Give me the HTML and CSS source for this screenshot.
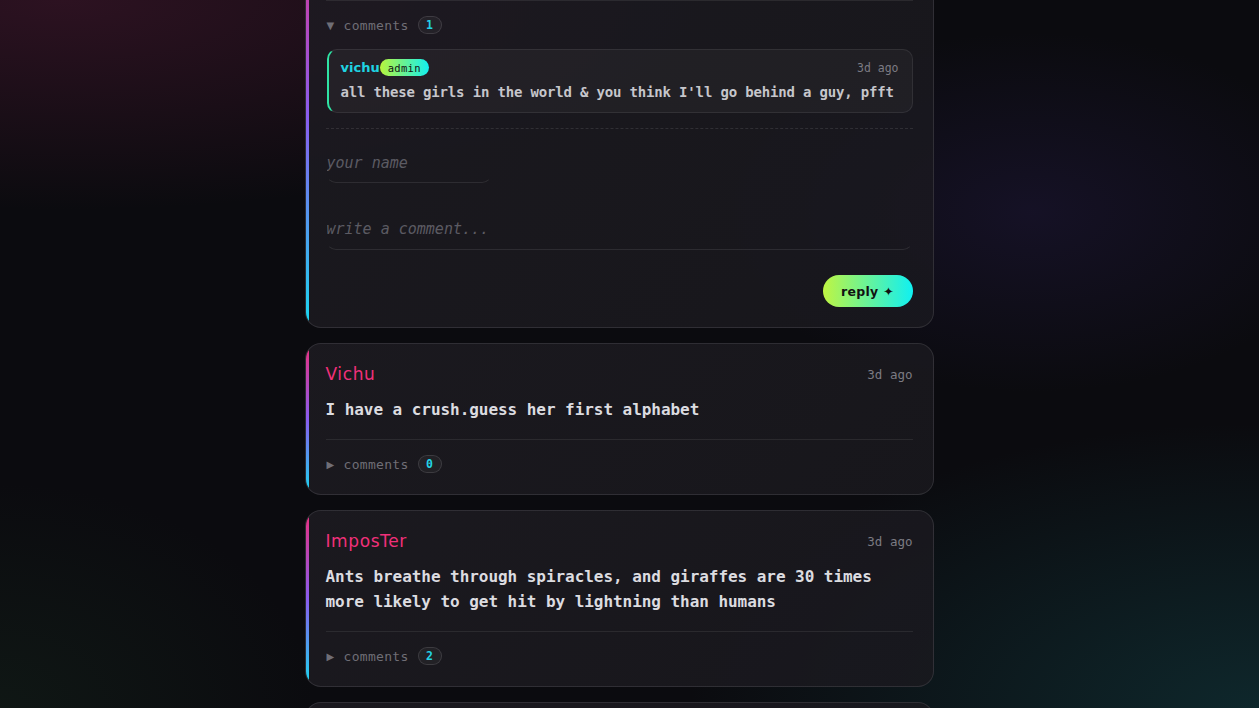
FILE: index.html
```html
<!DOCTYPE html>
<html lang="en">
<head>
<meta charset="utf-8">
<title>confessions</title>
<link rel="stylesheet" href="styles.css">
</head>
<body>
<div class="page">
  <main class="feed">
    <article class="card">
      <header class="card-head">
        <span class="author">anon</span>
        <span class="time">3d ago</span>
      </header>
      <p class="card-text">hello there</p>
      <section class="comments">
        <div class="toggle"><span class="caret">▼</span> comments <span class="count">1</span></div>
        <div class="reply">
          <div class="reply-head">
            <span class="reply-name">vichu</span><span class="admin">admin</span>
            <span class="reply-time">3d ago</span>
          </div>
          <p class="reply-text">all these girls in the world &amp; you think I'll go behind a guy, pfft</p>
        </div>
        <form class="reply-form">
          <input class="name-input" type="text" placeholder="your name">
          <textarea class="comment-input" rows="1" placeholder="write a comment..."></textarea>
          <div class="form-actions">
            <button class="reply-btn" type="button">reply ✦</button>
          </div>
        </form>
      </section>
    </article>

    <article class="card">
      <header class="card-head">
        <span class="author">Vichu</span>
        <span class="time">3d ago</span>
      </header>
      <p class="card-text">I have a crush.guess her first alphabet</p>
      <section class="comments">
        <div class="toggle"><span class="caret">▶</span> comments <span class="count">0</span></div>
      </section>
    </article>

    <article class="card">
      <header class="card-head">
        <span class="author">ImposTer</span>
        <span class="time">3d ago</span>
      </header>
      <p class="card-text">Ants breathe through spiracles, and giraffes are 30 times more likely to get hit by lightning than humans</p>
      <section class="comments">
        <div class="toggle"><span class="caret">▶</span> comments <span class="count">2</span></div>
      </section>
    </article>

    <article class="card">
      <header class="card-head">
        <span class="author">anon</span>
        <span class="time">3d ago</span>
      </header>
      <p class="card-text">...</p>
    </article>
  </main>
</div>
</body>
</html>
```
FILE: styles.css
```css
html, body {
  margin: 0;
  height: 100%;
}
body {
  overflow: hidden;
  background-color: #0b0b0f;
  background-image:
    radial-gradient(ellipse 900px 280px at 5% 0%, rgba(95, 28, 60, 0.4), transparent 75%),
    radial-gradient(ellipse 420px 240px at 82% 30%, rgba(45, 32, 90, 0.3), transparent 75%),
    radial-gradient(ellipse 760px 380px at 100% 100%, rgba(20, 85, 90, 0.38), transparent 75%),
    radial-gradient(ellipse 420px 300px at 0% 100%, rgba(30, 65, 40, 0.22), transparent 75%);
  font-family: "DejaVu Sans Mono", "Liberation Mono", monospace;
  color: #e6e6ea;
}
.page {
  display: flex;
  justify-content: center;
  padding-right: 21px;
}
.feed {
  width: 629px;
  margin-top: -96px;
  display: flex;
  flex-direction: column;
  gap: 15px;
}
.card {
  position: relative;
  overflow: hidden;
  box-sizing: border-box;
  border: 1px solid rgba(255, 255, 255, 0.1);
  border-radius: 16px;
  padding: 20px;
  background: linear-gradient(135deg, rgba(30, 28, 35, 0.82), rgba(26, 25, 31, 0.82));
}
.card::before {
  content: "";
  position: absolute;
  left: 0;
  top: 0;
  bottom: 0;
  width: 3px;
  background: linear-gradient(180deg, #ec2f7f 0%, #8a5cf0 50%, #18d8f0 100%);
}
.card-head {
  display: flex;
  justify-content: space-between;
  align-items: center;
  height: 20px;
}
.author {
  font-family: "DejaVu Sans", sans-serif;
  font-size: 17px;
  letter-spacing: 0.6px;
  color: #f0307a;
}
.time {
  font-size: 12.5px;
  color: #7c7b83;
}
.card-text {
  margin: 13px 0 17px;
  font-size: 16px;
  font-weight: bold;
  letter-spacing: -0.05px;
  line-height: 25px;
  color: #dcdce0;
}
.comments {
  border-top: 1px solid rgba(255, 255, 255, 0.08);
  padding-top: 14px;
}
.toggle {
  display: flex;
  align-items: center;
  height: 20px;
  font-size: 13px;
  letter-spacing: 0.3px;
  color: #6f6e76;
  gap: 7px;
}
.caret {
  font-family: "DejaVu Sans", sans-serif;
  font-size: 10px;
  width: 10px;
  padding-left: 1px;
}
.count {
  margin-left: 2px;
  display: inline-flex;
  align-items: center;
  justify-content: center;
  width: 24px;
  height: 18px;
  box-sizing: border-box;
  border: 1px solid rgba(255, 255, 255, 0.12);
  border-radius: 9px;
  background: rgba(255, 255, 255, 0.04);
  color: #22d3e6;
  font-size: 11.5px;
  font-weight: bold;
  letter-spacing: 0;
}
.reply {
  margin: 14px 0 15px 1px;
  border: 1px solid rgba(255, 255, 255, 0.08);
  border-left: 2px solid #2fe3a4;
  border-radius: 10px;
  background: rgba(255, 255, 255, 0.035);
  padding: 9px 13px 10px 12px;
}
.reply-head {
  display: flex;
  align-items: center;
  height: 17px;
}
.reply-name {
  font-family: "DejaVu Sans", sans-serif;
  font-weight: bold;
  font-size: 13px;
  color: #1fd3e2;
}
.admin {
  display: inline-flex;
  align-items: center;
  height: 17px;
  padding: 0 8px;
  border-radius: 9px;
  background: linear-gradient(90deg, #b8f53c, #12f0f0);
  color: #121212;
  font-size: 10.5px;
  letter-spacing: 0.3px;
}
.reply-time {
  margin-left: auto;
  font-size: 11.5px;
  color: #7c7b83;
}
.reply-text {
  margin: 6px 0 0;
  font-size: 14px;
  letter-spacing: -0.17px;
  white-space: nowrap;
  font-weight: bold;
  line-height: 20px;
  color: #c6c6cb;
}
.reply-form {
  border-top: 1px dashed rgba(255, 255, 255, 0.1);
  padding-top: 13px;
  display: flex;
  flex-direction: column;
  align-items: flex-start;
}
.name-input,
.comment-input {
  box-sizing: border-box;
  background: transparent;
  border: 1px solid transparent;
  border-bottom-color: rgba(255, 255, 255, 0.09);
  border-radius: 10px;
  color: #d4d4d8;
  font-family: "DejaVu Sans Mono", "Liberation Mono", monospace;
  font-size: 15px;
  line-height: 20px;
  outline: none;
}
.name-input::placeholder,
.comment-input::placeholder {
  color: #5c5b63;
  font-style: italic;
}
.name-input {
  width: 166px;
  height: 41px;
  padding: 10px 0 9px;
  border-top: 0;
}
.comment-input {
  width: 100%;
  height: 47px;
  margin-top: 20px;
  padding: 16px 0 10px;
  border-top: 0;
  resize: none;
  overflow: hidden;
}
.form-actions {
  align-self: stretch;
  display: flex;
  justify-content: flex-end;
  margin-top: 25px;
}
.reply-btn {
  height: 32px;
  width: 90px;
  border: 0;
  border-radius: 16px;
  background: linear-gradient(90deg, #bff542, #10f0f2);
  color: #111;
  font-family: "DejaVu Sans", sans-serif;
  font-weight: bold;
  font-size: 12.5px;
  letter-spacing: 0.3px;
  cursor: pointer;
}
```
